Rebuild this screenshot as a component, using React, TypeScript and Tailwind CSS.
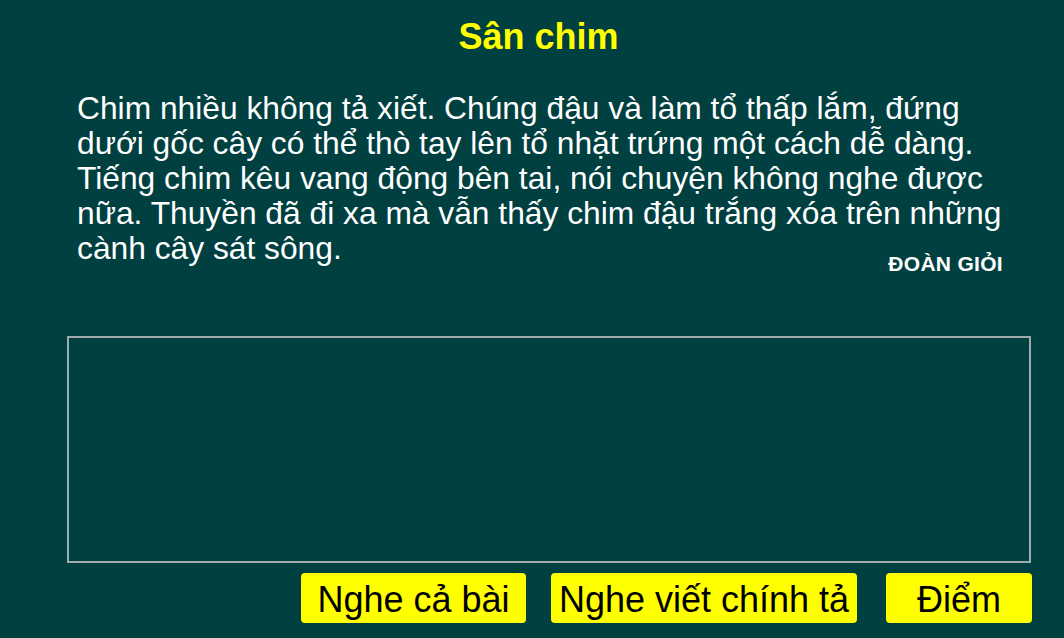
export default function App() {
  return (
    <div
      className="w-[1064px] h-[638px] bg-[#004040] overflow-hidden"
      style={{ fontFamily: '"Liberation Sans", Arial, sans-serif' }}
    >
      {/* Tiêu đề bài */}
      <h1 className="pt-[19px] pl-[13px] text-center text-[36px] leading-[36px] font-bold text-[#ffff00]">
        Sân chim
      </h1>

      {/* Đoạn văn chính tả */}
      <div className="ml-[77px] w-[935px] mt-[36px]">
        <p className="text-[31.75px] leading-[35px] text-white">
          Chim nhiều không tả xiết. Chúng đậu và làm tổ thấp lắm, đứng dưới gốc cây có thể thò tay lên tổ nhặt trứng một cách dễ dàng. Tiếng chim kêu vang động bên tai, nói chuyện không nghe được nữa. Thuyền đã đi xa mà vẫn thấy chim đậu trắng xóa trên những cành cây sát sông.
        </p>
        <div className="mt-[-13px] pr-[9px] text-right text-[21px] leading-[21px] font-bold text-white tracking-[0.3px]">
          ĐOÀN GIỎI
        </div>
      </div>

      {/* Ô viết bài */}
      <div className="mt-[62px] ml-[67px] w-[964px] h-[227px] border-2 border-[#9fabab]" />

      {/* Các nút điều khiển */}
      <div className="mt-[10px] flex">
        <button className="ml-[301px] w-[225px] h-[50px] pt-[3px] leading-[47px] rounded-[4px] bg-[#ffff00] text-[36px] text-black text-center">
          Nghe cả bài
        </button>
        <button className="ml-[25px] w-[306px] h-[50px] pt-[3px] leading-[47px] rounded-[4px] bg-[#ffff00] text-[36px] text-black text-center whitespace-nowrap">
          Nghe viết chính tả
        </button>
        <button className="ml-[29px] w-[146px] h-[50px] pt-[3px] leading-[47px] rounded-[4px] bg-[#ffff00] text-[36px] text-black text-center">
          Điểm
        </button>
      </div>
    </div>
  );
}
